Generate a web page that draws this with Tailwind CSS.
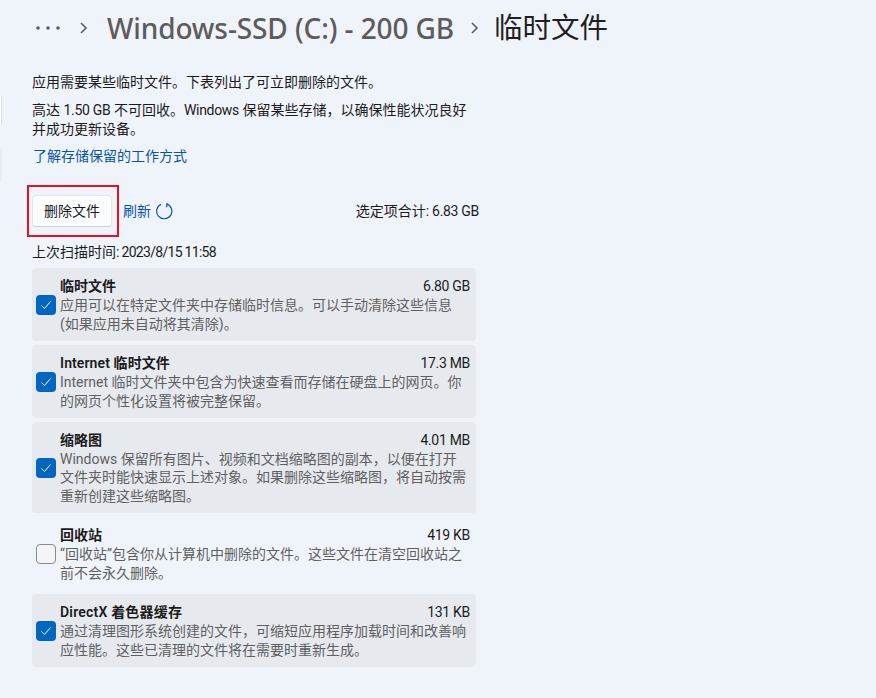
<!DOCTYPE html>
<html><head><meta charset="utf-8"><script src="https://cdn.jsdelivr.net/npm/@tailwindcss/browser@4"></script></head>
<body class="m-0 overflow-hidden">
<div class="relative w-[876px] h-[698px] bg-[#eff4fb] text-[#1b1b1b] text-[14px] leading-[19px] font-['Roboto','Noto_Sans_CJK_SC',sans-serif]">
  <div class="absolute left-0 top-[94px] w-[2px] h-[30px] bg-white border-r border-[#dcdfe4] rounded-r-sm"></div>
  <div class="absolute left-0 top-[148px] w-[2px] h-[34px] bg-[#e9edf2] rounded-r-sm"></div>
  <div class="w-[444px] ml-[32px] flex flex-col">
    <div class="-ml-[32px] w-[876px] h-[56px] pl-[36px] flex items-center text-[28px] whitespace-nowrap">
      <svg width="24" height="6" viewBox="0 0 24 6" class="mr-[19px]"><g fill="#5c5c5c"><circle cx="2" cy="3" r="1.8"/><circle cx="12" cy="3" r="1.8"/><circle cx="22" cy="3" r="1.8"/></g></svg>
      <svg width="10" height="14" viewBox="0 0 10 14" class="mr-[18px]"><path d="M2 2l5 5-5 5" fill="none" stroke="#5c5c5c" stroke-width="1.6"/></svg>
      <span class="font-medium text-[#5c5c5c] font-['Noto_Sans'] tracking-[-0.1px]">Windows-SSD (C:) - 200 GB</span>
      <svg width="10" height="14" viewBox="0 0 10 14" class="ml-[16px] mr-[14px]"><path d="M2 2l5 5-5 5" fill="none" stroke="#5c5c5c" stroke-width="1.6"/></svg>
      <span class="text-[#1f1f1f] text-[28.5px]">临时文件</span>
    </div>
    <p class="mt-[17px]">应用需要某些临时文件。下表列出了可立即删除的文件。</p>
    <p class="mt-[9px] w-[444px] leading-[18.5px]">高达 <span class="tracking-[-0.3px]">1.50 GB</span> 不可回收。<span class="tracking-[-0.3px]">Windows</span> 保留某些存储，以确保性能状况良好<br>并成功更新设备。</p>
    <a class="mt-[9px] ml-[1px] text-[#0b54a5]">了解存储保留的工作方式</a>
    <div class="relative mt-[29px] w-[447px] h-[32px] flex items-center">
      <div class="absolute -left-[5px] -top-[10px] w-[92px] h-[52px] border-[2px] border-[#e81123]"></div>
      <button class="w-[80px] h-[32px] bg-[#fbfcfe] border border-[#e3e6ea] border-b-[#cfd2d6] rounded-[4px]">删除文件</button>
      <span class="ml-[11px] text-[#0b54a5]">刷新</span>
      <svg width="18" height="18" viewBox="0 0 18 18" class="ml-[4px]"><path d="M6.2 2.2 A7.6 7.6 0 1 0 11.5 1.9 M12 1 L11.6 5.2" fill="none" stroke="#0b54a5" stroke-width="1.2"/></svg>
      <span class="ml-auto">选定项合计<span class="tracking-[-0.3px]">: 6.83 GB</span></span>
    </div>
    <p class="mt-[16px]">上次扫描时间<span class="tracking-[-0.7px]">: 2023/8/15 11:58</span></p>
    <div class="mt-[6px] flex flex-col gap-[4px]">
      <div class="flex items-center h-[73px] rounded-[4px] bg-[#e6eaef] pl-[4px] pr-[6px]">
        <div class="w-[20px] h-[20px] rounded-[4px] bg-[#0067c0] shrink-0 mr-[4px] flex items-center justify-center"><svg width="12" height="12" viewBox="0 0 12 12"><path d="M1.5 6.5l3 3 6-7" fill="none" stroke="white" stroke-width="1"/></svg></div>
        <div class="flex-1 pt-[1px]">
          <div class="flex justify-between"><b class="font-semibold">临时文件</b><span class="tracking-[-0.3px]">6.80 GB</span></div>
          <p class="text-[#5f5f5f] leading-[18.5px]">应用可以在特定文件夹中存储临时信息。可以手动清除这些信息<br>(如果应用未自动将其清除)。</p>
        </div>
      </div>
      <div class="flex items-center h-[73px] rounded-[4px] bg-[#e6eaef] pl-[4px] pr-[6px]">
        <div class="w-[20px] h-[20px] rounded-[4px] bg-[#0067c0] shrink-0 mr-[4px] flex items-center justify-center"><svg width="12" height="12" viewBox="0 0 12 12"><path d="M1.5 6.5l3 3 6-7" fill="none" stroke="white" stroke-width="1"/></svg></div>
        <div class="flex-1 pt-[1px]">
          <div class="flex justify-between"><b class="font-semibold tracking-[0.1px]">Internet 临时文件</b><span class="tracking-[-0.3px]">17.3 MB</span></div>
          <p class="text-[#5f5f5f] leading-[18.5px]">Internet 临时文件夹中包含为快速查看而存储在硬盘上的网页。你<br>的网页个性化设置将被完整保留。</p>
        </div>
      </div>
      <div class="flex items-center h-[91px] rounded-[4px] bg-[#e6eaef] pl-[4px] pr-[6px]">
        <div class="w-[20px] h-[20px] rounded-[4px] bg-[#0067c0] shrink-0 mr-[4px] flex items-center justify-center"><svg width="12" height="12" viewBox="0 0 12 12"><path d="M1.5 6.5l3 3 6-7" fill="none" stroke="white" stroke-width="1"/></svg></div>
        <div class="flex-1 pt-[1px]">
          <div class="flex justify-between"><b class="font-semibold">缩略图</b><span class="tracking-[-0.3px]">4.01 MB</span></div>
          <p class="text-[#5f5f5f] leading-[18.5px]">Windows 保留所有图片、视频和文档缩略图的副本，以便在打开<br>文件夹时能快速显示上述对象。如果删除这些缩略图，将自动按需<br>重新创建这些缩略图。</p>
        </div>
      </div>
      <div class="flex items-center h-[73px] rounded-[4px] pl-[4px] pr-[6px]">
        <div class="w-[20px] h-[20px] rounded-[4px] bg-[#f3f5f8] border border-[#8a8a8a] shrink-0 mr-[4px]"></div>
        <div class="flex-1 pt-[1px]">
          <div class="flex justify-between"><b class="font-semibold">回收站</b><span class="tracking-[-0.3px]">419 KB</span></div>
          <p class="text-[#5f5f5f] leading-[18.5px]">“回收站”包含你从计算机中删除的文件。这些文件在清空回收站之<br>前不会永久删除。</p>
        </div>
      </div>
      <div class="flex items-center h-[73px] rounded-[4px] bg-[#e6eaef] pl-[4px] pr-[6px]">
        <div class="w-[20px] h-[20px] rounded-[4px] bg-[#0067c0] shrink-0 mr-[4px] flex items-center justify-center"><svg width="12" height="12" viewBox="0 0 12 12"><path d="M1.5 6.5l3 3 6-7" fill="none" stroke="white" stroke-width="1"/></svg></div>
        <div class="flex-1 pt-[1px]">
          <div class="flex justify-between"><b class="font-semibold tracking-[0.2px]">DirectX 着色器缓存</b><span class="tracking-[-0.3px]">131 KB</span></div>
          <p class="text-[#5f5f5f] leading-[18.5px]">通过清理图形系统创建的文件，可缩短应用程序加载时间和改善响<br>应性能。这些已清理的文件将在需要时重新生成。</p>
        </div>
      </div>
    </div>
  </div>
</div>
</body></html>
